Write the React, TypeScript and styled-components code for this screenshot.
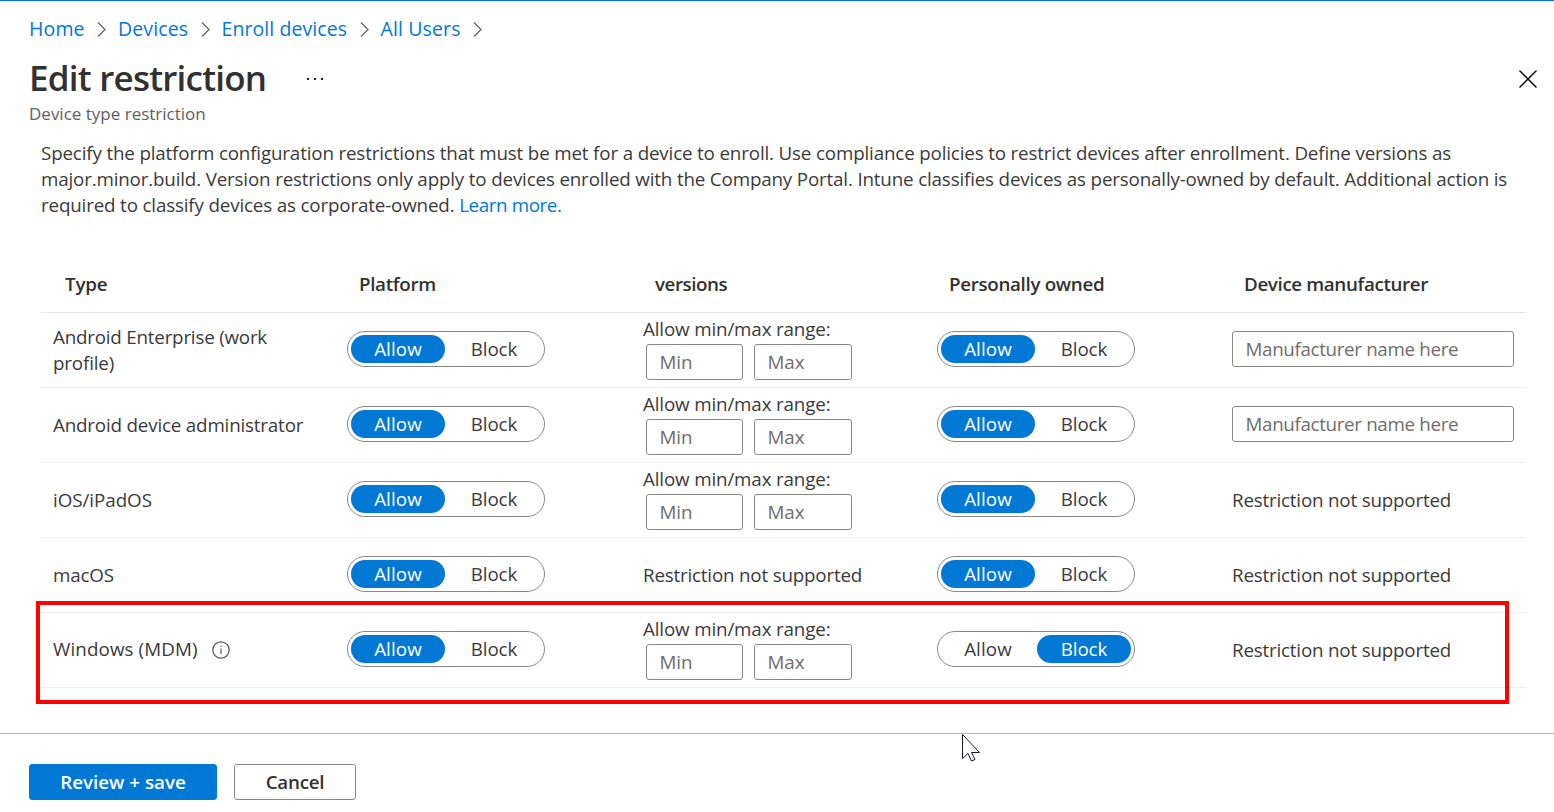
import React from 'react';
import styled, { createGlobalStyle } from 'styled-components';

const GlobalStyle = createGlobalStyle`
  *, *::before, *::after { box-sizing: border-box; }
  body { margin: 0; background: #fff; overflow: hidden; }
  button, input { font: inherit; letter-spacing: inherit; margin: 0; }
`;

const Page = styled.div`
  position: relative;
  display: flex;
  flex-direction: column;
  height: 812px;
  border-top: 1px solid #0078d4;
  color: #3b3a39;
  font-family: 'Open Sans', 'Noto Sans', sans-serif;
  font-size: 18.8px;
  line-height: 26px;
`;

const Tracked = styled.span<{ $ls?: number }>`
  letter-spacing: ${(p) => p.$ls ?? 0}px;
  white-space: nowrap;
`;

const Breadcrumb = styled.nav`
  display: flex;
  align-items: center;
  height: 26px;
  margin: 15px 0 0 29px;
`;

const Crumb = styled.a<{ $ls: number; $w: number }>`
  color: #0078d4;
  font-size: 19.5px;
  letter-spacing: ${(p) => p.$ls}px;
  width: ${(p) => p.$w}px;
  white-space: nowrap;
`;

const Chevron = styled.svg`
  width: 9px;
  height: 15px;
  margin: 0 12px;
  flex: none;
`;

const TitleRow = styled.header`
  display: flex;
  align-items: center;
  height: 50px;
  margin: 12px 16px 0 29px;
`;

const Title = styled.h1`
  margin: 0;
  padding-bottom: 2px;
  width: 277px;
  color: #323130;
  font-size: 35px;
  font-weight: 600;
  line-height: 48px;
  letter-spacing: -0.77px;
  white-space: nowrap;
`;

const Dots = styled.svg`
  width: 18px;
  height: 4px;
`;

const CloseIcon = styled.svg`
  width: 20px;
  height: 20px;
  margin-left: auto;
`;

const Subtitle = styled.div`
  height: 24px;
  margin-left: 29px;
  color: #605e5c;
  font-size: 17px;
  line-height: 20px;
`;

const Description = styled.p`
  display: flex;
  flex-direction: column;
  margin: 12px 0 0 41px;
`;

const Link = styled.a`
  color: #0078d4;
  letter-spacing: -0.4px;
`;

const Table = styled.section`
  margin: 38px 28px 0 41px;
`;

const Row = styled.div<{ $head?: boolean }>`
  display: grid;
  grid-template-columns: 294px 296px 294px 295px 1fr;
  align-items: center;
  height: ${(p) => (p.$head ? 57 : 75)}px;
  border-bottom: 1px solid ${(p) => (p.$head ? '#e6e5e4' : '#f0efee')};
`;

const HeadCell = styled.div<{ $ls: number }>`
  padding-left: 24px;
  color: #323130;
  font-weight: 600;
  letter-spacing: ${(p) => p.$ls}px;
  white-space: nowrap;
`;

const Cell = styled.div`
  padding: 0 12px 2px;
  display: flex;
  align-items: center;
`;

const TypeLabel = styled.div<{ $raised?: boolean }>`
  display: flex;
  flex-direction: column;
  padding-top: ${(p) => (p.$raised ? 0 : 1)}px;
  padding-bottom: ${(p) => (p.$raised ? 1 : 0)}px;
`;

const InfoIcon = styled.svg`
  width: 18px;
  height: 18px;
  margin: 1px 0 0 14px;
`;

const ToggleGroup = styled.div`
  display: flex;
  gap: 2px;
  width: 198px;
  height: 36px;
  padding: 3px;
  border: 1px solid #8a8886;
  border-radius: 18px;
`;

const ToggleOption = styled.button<{ $on: boolean; $ls: number }>`
  width: 94px;
  height: 28px;
  padding: 0;
  border: 0;
  border-radius: 14px;
  background: ${(p) => (p.$on ? '#0078d4' : 'transparent')};
  color: ${(p) => (p.$on ? '#fff' : '#3b3a39')};
  font-weight: ${(p) => (p.$on ? 500 : 400)};
  letter-spacing: ${(p) => p.$ls}px;
  line-height: 28px;
`;

const Versions = styled.div`
  display: flex;
  flex-direction: column;
  height: 66px;
`;

const RangeInputs = styled.div`
  display: flex;
  gap: 11px;
  margin: 2px 0 0 3px;
`;

const Field = styled.input<{ $w: number; $ls: number }>`
  width: ${(p) => p.$w}px;
  height: 36px;
  padding: 0 12px 0 12.5px;
  border: 1px solid #8a8886;
  border-radius: 3px;
  outline: 0;
  letter-spacing: ${(p) => p.$ls}px;
  &::placeholder { color: #6f6d6b; opacity: 1; }
`;

const Note = styled(Tracked)`
  padding-top: 2px;
`;

const Footer = styled.footer`
  display: flex;
  gap: 17px;
  margin-top: 45px;
  padding: 30px 0 0 29px;
  border-top: 1px solid #b8b7b6;
`;

const Button = styled.button<{ $primary?: boolean; $ls: number }>`
  width: ${(p) => (p.$primary ? 188 : 122)}px;
  height: 36px;
  padding: 0;
  border: 1px solid ${(p) => (p.$primary ? '#0078d4' : '#8a8886')};
  border-radius: 3px;
  background: ${(p) => (p.$primary ? '#0078d4' : '#fff')};
  color: ${(p) => (p.$primary ? '#fff' : '#323130')};
  font-weight: 600;
  letter-spacing: ${(p) => p.$ls}px;
`;

const Highlight = styled.div`
  position: absolute;
  left: 36px;
  top: 600px;
  width: 1473px;
  height: 103px;
  border: 4px solid #fe0000;
  pointer-events: none;
`;

const Pointer = styled.svg`
  position: absolute;
  left: 961px;
  top: 732px;
  width: 20px;
  height: 30px;
`;

function Toggle({ value }: { value: 'Allow' | 'Block' }) {
  return (
    <ToggleGroup>
      <ToggleOption $on={value === 'Allow'} $ls={0.1}>Allow</ToggleOption>
      <ToggleOption $on={value === 'Block'} $ls={-0.15}>Block</ToggleOption>
    </ToggleGroup>
  );
}

function Unsupported() {
  return <Note $ls={-0.19}>Restriction not supported</Note>;
}

function Range() {
  return (
    <Versions>
      <Tracked $ls={-0.15}>Allow min/max range:</Tracked>
      <RangeInputs>
        <Field $w={97} $ls={-0.1} placeholder="Min" />
        <Field $w={98} $ls={-0.1} placeholder="Max" />
      </RangeInputs>
    </Versions>
  );
}

const crumbs = [
  { text: 'Home', ls: 0.15, w: 56 },
  { text: 'Devices', ls: 0.12, w: 70.5 },
  { text: 'Enroll devices', ls: 0.08, w: 126 },
  { text: 'All Users', ls: 0.12, w: 80 },
];

const heads = [
  { text: 'Type', ls: -0.2 },
  { text: 'Platform', ls: -0.33 },
  { text: 'versions', ls: -0.45 },
  { text: 'Personally owned', ls: -0.33 },
  { text: 'Device manufacturer', ls: -0.37 },
];

type RowData = {
  label: { text: string; ls: number }[];
  info?: boolean;
  range: boolean;
  personal: 'Allow' | 'Block';
  maker: boolean;
};

const rows: RowData[] = [
  { label: [{ text: 'Android Enterprise (work', ls: -0.21 }, { text: 'profile)', ls: -0.15 }], range: true, personal: 'Allow', maker: true },
  { label: [{ text: 'Android device administrator', ls: -0.18 }], range: true, personal: 'Allow', maker: true },
  { label: [{ text: 'iOS/iPadOS', ls: -0.05 }], range: true, personal: 'Allow', maker: false },
  { label: [{ text: 'macOS', ls: -0.15 }], range: false, personal: 'Allow', maker: false },
  { label: [{ text: 'Windows (MDM)', ls: 0.1 }], info: true, range: true, personal: 'Block', maker: false },
];

export default function App() {
  return (
    <>
      <GlobalStyle />
      <Page>
        <Breadcrumb>
          {crumbs.map((c) => (
            <React.Fragment key={c.text}>
              <Crumb $ls={c.ls} $w={c.w}>{c.text}</Crumb>
              <Chevron viewBox="0 0 9 15" fill="none" stroke="#605e5c" strokeWidth="1.2">
                <path d="M1 0.5 8 7.5 1 14.5" />
              </Chevron>
            </React.Fragment>
          ))}
        </Breadcrumb>
        <TitleRow>
          <Title>Edit restriction</Title>
          <Dots viewBox="0 0 18 4" fill="#1b1a19">
            <rect x="1" y="1" width="2" height="2" />
            <rect x="8" y="1" width="2" height="2" />
            <rect x="15" y="1" width="2" height="2" />
          </Dots>
          <CloseIcon viewBox="0 0 20 20" fill="none" stroke="#000" strokeWidth="1.4">
            <path d="M1.5 1.5 18.5 18.5M18.5 1.5 1.5 18.5" />
          </CloseIcon>
        </TitleRow>
        <Subtitle><Tracked>Device type restriction</Tracked></Subtitle>
        <Description>
          <Tracked $ls={-0.16}>Specify the platform configuration restrictions that must be met for a device to enroll. Use compliance policies to restrict devices after enrollment. Define versions as</Tracked>
          <Tracked $ls={-0.166}>major.minor.build. Version restrictions only apply to devices enrolled with the Company Portal. Intune classifies devices as personally-owned by default. Additional action is</Tracked>
          <Tracked $ls={-0.16}>required to classify devices as corporate-owned. <Link>Learn more.</Link></Tracked>
        </Description>
        <Table>
          <Row $head>
            {heads.map((h) => <HeadCell key={h.text} $ls={h.ls}>{h.text}</HeadCell>)}
          </Row>
          {rows.map((r) => (
            <Row key={r.label[0].text}>
              <Cell>
                <TypeLabel $raised={r.info}>
                  {r.label.map((l) => <Tracked key={l.text} $ls={l.ls}>{l.text}</Tracked>)}
                </TypeLabel>
                {r.info && (
                  <InfoIcon viewBox="0 0 18 18" fill="none" stroke="#605e5c" strokeWidth="1.3">
                    <circle cx="9" cy="9" r="8.2" />
                    <path d="M9 7.5V13M9 4.8V6.1" />
                  </InfoIcon>
                )}
              </Cell>
              <Cell><Toggle value="Allow" /></Cell>
              <Cell>{r.range ? <Range /> : <Unsupported />}</Cell>
              <Cell><Toggle value={r.personal} /></Cell>
              <Cell>{r.maker ? <Field $w={282} $ls={-0.34} placeholder="Manufacturer name here" /> : <Unsupported />}</Cell>
            </Row>
          ))}
        </Table>
        <Footer>
          <Button $primary $ls={0}>Review + save</Button>
          <Button $ls={-0.25}>Cancel</Button>
        </Footer>
        <Highlight />
        <Pointer viewBox="0 0 20 30" fill="#fff" stroke="#1b1a22" strokeWidth="1">
          <path d="M1.5 1.5V25.5L7 20.5L10.5 28L14 26.5L10.5 19.5H18.5Z" />
        </Pointer>
      </Page>
    </>
  );
}
